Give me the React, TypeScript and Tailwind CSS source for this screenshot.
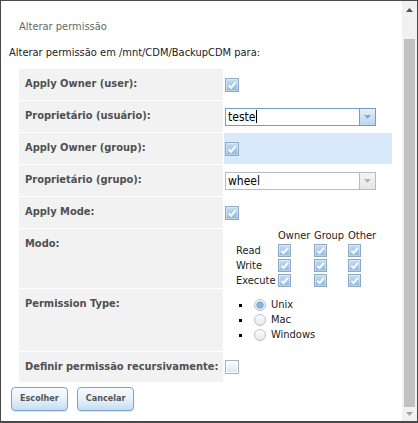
import { useId } from 'react';

type Row = { label: string; height: string; highlight?: boolean; body: React.ReactNode };

function CheckBox({ checked, size = 14 }: { checked: boolean; size?: number }) {
    const id = useId();
    const s = size;
    return (
        <svg width={s} height={s} viewBox={`0 0 ${s} ${s}`} className="block shrink-0">
            <defs>
                <linearGradient id={id} x1="0" y1="0" x2="0" y2="1">
                    {checked ? (
                        <>
                            <stop offset="0" stopColor="#c9e0f4" />
                            <stop offset="1" stopColor="#8db6de" />
                        </>
                    ) : (
                        <>
                            <stop offset="0" stopColor="#ffffff" />
                            <stop offset="1" stopColor="#d7e6f5" />
                        </>
                    )}
                </linearGradient>
            </defs>
            <rect x="0.5" y="0.5" width={s - 1} height={s - 1} fill={`url(#${id})`} stroke={checked ? '#8fa9c2' : '#aab1b9'} />
            <rect x="1.5" y="1.5" width={s - 3} height={s - 3} fill="none" stroke="#ffffff" strokeOpacity={checked ? 0.35 : 0.9} />
            {checked && (
                <path
                    d={`M${s * 0.26} ${s * 0.52} L${s * 0.43} ${s * 0.7} L${s * 0.76} ${s * 0.3}`}
                    stroke="#ffffff"
                    strokeWidth="1.8"
                    fill="none"
                />
            )}
        </svg>
    );
}

function Radio({ checked }: { checked: boolean }) {
    const id = useId();
    return (
        <svg width="12" height="12" viewBox="0 0 12 12" className="block shrink-0">
            <defs>
                <linearGradient id={id} x1="0" y1="0" x2="0" y2="1">
                    <stop offset="0" stopColor="#ffffff" />
                    <stop offset="1" stopColor="#e3e9ef" />
                </linearGradient>
            </defs>
            <circle cx="6" cy="6" r="5.5" fill={`url(#${id})`} stroke="#bcc1c6" />
            {checked && <circle cx="6" cy="6" r="3.3" fill="#86b6e0" stroke="#6b9fcf" strokeWidth="0.8" />}
        </svg>
    );
}

function Select({ value, focused }: { value: string; focused?: boolean }) {
    return (
        <div
            className={`flex h-[18px] w-[151px] border bg-white ${focused ? 'border-[#769dc0]' : 'border-[#b5bcc7]'}`}
        >
            <div className="flex flex-1 items-center pl-[2px] text-[12px] leading-[16px] text-black">
                {value}
                {focused && <span className="ml-px h-[13px] w-px bg-black" />}
            </div>
            <div
                className={`flex w-[16px] items-center justify-center border-l ${
                    focused
                        ? 'border-[#769dc0] bg-linear-to-b from-[#e3effb] to-[#bad6f2]'
                        : 'border-[#b5bcc7] bg-linear-to-b from-[#f4f4f4] to-[#e6e6e6]'
                }`}
            >
                <svg width="7" height="4" viewBox="0 0 7 4">
                    <polygon points="0,0 7,0 3.5,4" fill={focused ? '#8ea6bd' : '#b4b4b4'} />
                </svg>
            </div>
        </div>
    );
}

function ModeMatrix() {
    const cols = ['Owner', 'Group', 'Other'];
    const perms = ['Read', 'Write', 'Execute'];
    return (
        <div className="ml-[11px] grid grid-cols-[42px_36px_34px_29px] text-[11px] leading-[14px] text-[#222]">
            <span />
            {cols.map((c) => (
                <span key={c} className="h-[14px]">{c}</span>
            ))}
            {perms.map((p) => (
                <div key={p} className="contents">
                    <span className="flex h-[15px] items-center">{p}</span>
                    {cols.map((c) => (
                        <span key={c} className="flex h-[15px] items-center">
                            <CheckBox checked size={13} />
                        </span>
                    ))}
                </div>
            ))}
        </div>
    );
}

function PermissionTypes() {
    const types = ['Unix', 'Mac', 'Windows'];
    return (
        <ul className="ml-[14px] text-[11px] leading-[14px] text-[#222]">
            {types.map((t, i) => (
                <li key={t} className="flex h-[15px] items-center">
                    <span className="h-[3px] w-[3px] bg-black" />
                    <span className="ml-[12px]">
                        <Radio checked={i === 0} />
                    </span>
                    <span className="ml-[5px]">{t}</span>
                </li>
            ))}
        </ul>
    );
}

export default function App() {
    const rows: Row[] = [
        { label: 'Apply Owner (user):', height: 'h-[31px]', body: <CheckBox checked /> },
        { label: 'Proprietário (usuário):', height: 'h-[31px]', body: <Select value="teste" focused /> },
        { label: 'Apply Owner (group):', height: 'h-[31px]', highlight: true, body: <CheckBox checked /> },
        { label: 'Proprietário (grupo):', height: 'h-[31px]', body: <Select value="wheel" /> },
        { label: 'Apply Mode:', height: 'h-[31px]', body: <CheckBox checked /> },
        { label: 'Modo:', height: 'h-[59px]', body: <ModeMatrix /> },
        { label: 'Permission Type:', height: 'h-[62px]', body: <PermissionTypes /> },
        { label: 'Definir permissão recursivamente:', height: 'h-[30px]', body: <CheckBox checked={false} /> },
    ];

    return (
        <div className="flex h-[423px] w-[418px] border border-b-2 border-[#4a4a4a] bg-white font-['DejaVu_Sans_Condensed','DejaVu_Sans',sans-serif]">
            <div className="flex flex-1 flex-col">
                <div className="ml-[18px] mt-[19px] h-[14px] text-[11px] leading-[14px] text-[#666]">Alterar permissão</div>
                <div className="ml-[8px] mt-[12px] h-[14px] text-[11px] leading-[14px] text-[#222]">
                    Alterar permissão em /mnt/CDM/BackupCDM para:
                </div>

                <div className="ml-[18px] mt-[9px] flex flex-col gap-px">
                    {rows.map((r) => (
                        <div key={r.label} className={`flex gap-px ${r.height}`}>
                            <div className="w-[204px] bg-[#f2f2f2] pl-[6px] pt-[8px] text-[11px] font-bold leading-[14px] text-[#505050]">
                                {r.label}
                            </div>
                            <div className={`flex w-[168px] items-center pl-px ${r.highlight ? 'bg-[#d8e9fb]' : ''}`}>
                                {r.body}
                            </div>
                        </div>
                    ))}
                </div>

                <div className="ml-[10px] mt-[5px] flex gap-[9px]">
                    {['Escolher', 'Cancelar'].map((b) => (
                        <button
                            key={b}
                            className="h-[24px] rounded-[4px] border border-[#7ea3c6] bg-linear-to-b from-[#f7fbfe] via-[#e6f1fb] to-[#c6ddf4] px-[8px] text-[9px] font-bold text-[#555] shadow-[0_1px_1px_rgba(0,0,0,0.12)]"
                        >
                            {b}
                        </button>
                    ))}
                </div>
            </div>

            {/* scrollbar */}
            <div className="flex w-[15px] flex-col bg-[#f1f1f1]">
                <div className="flex h-[17px] items-center justify-center">
                    <svg width="7" height="4" viewBox="0 0 7 4">
                        <polygon points="0,4 7,4 3.5,0" fill="#505050" />
                    </svg>
                </div>
                <div className="ml-[2px] mt-[21px] h-[368px] w-[11px] bg-[#c1c1c1]" />
                <div className="flex flex-1 items-center justify-center">
                    <svg width="7" height="4" viewBox="0 0 7 4">
                        <polygon points="0,0 7,0 3.5,4" fill="#a3a3a3" />
                    </svg>
                </div>
            </div>
        </div>
    );
}
